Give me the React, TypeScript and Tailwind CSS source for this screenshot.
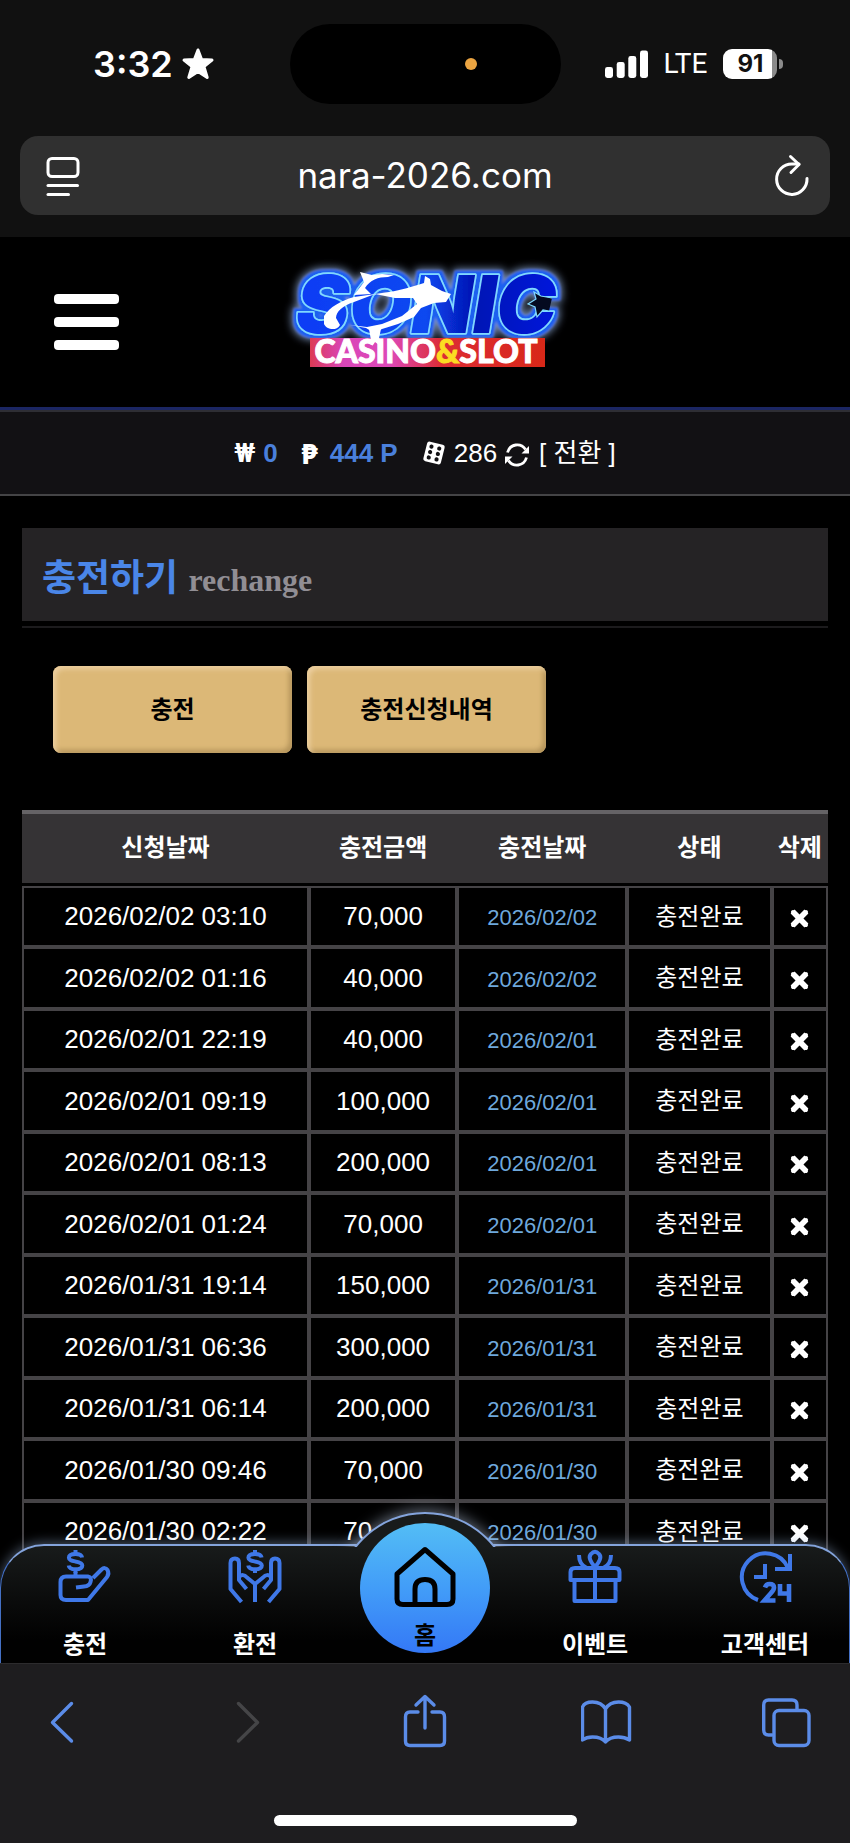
import type { ReactNode } from "react";

const SANS = "font-['Liberation_Sans','Noto_Sans_CJK_KR',sans-serif]";

type Deposit = { requested: string; amount: string; date: string };

const deposits: Deposit[] = [
  { requested: "2026/02/02 03:10", amount: "70,000", date: "2026/02/02" },
  { requested: "2026/02/02 01:16", amount: "40,000", date: "2026/02/02" },
  { requested: "2026/02/01 22:19", amount: "40,000", date: "2026/02/01" },
  { requested: "2026/02/01 09:19", amount: "100,000", date: "2026/02/01" },
  { requested: "2026/02/01 08:13", amount: "200,000", date: "2026/02/01" },
  { requested: "2026/02/01 01:24", amount: "70,000", date: "2026/02/01" },
  { requested: "2026/01/31 19:14", amount: "150,000", date: "2026/01/31" },
  { requested: "2026/01/31 06:36", amount: "300,000", date: "2026/01/31" },
  { requested: "2026/01/31 06:14", amount: "200,000", date: "2026/01/31" },
  { requested: "2026/01/30 09:46", amount: "70,000", date: "2026/01/30" },
  { requested: "2026/01/30 02:22", amount: "70,000", date: "2026/01/30" },
];

function StatusBar() {
  return (
    <div className="grid grid-cols-[1fr_271px_1fr] items-center pt-6">
      <div className="flex items-center gap-2 pl-[93px] font-['Inter',sans-serif] text-4xl font-semibold text-white">
        <span>3:32</span>
        <svg width="34" height="34" viewBox="0 0 34 34" fill="#fff" stroke="#fff" strokeWidth="3" strokeLinejoin="round" aria-hidden="true">
          <path d="M17 3 L20.6 12.6 L31 13.1 L22.9 19.5 L26.2 30.5 L17 24.4 L7.8 30.5 L11.1 19.5 L3 13.1 L13.4 12.6 Z" />
        </svg>
      </div>
      <div className="flex h-20 items-center justify-end rounded-full bg-black pr-[84px]">
        <span className="size-3 rounded-full bg-[#eba441]" />
      </div>
      <div className="flex items-center gap-4 pl-11 text-white">
        <svg width="43" height="28" viewBox="0 0 43 28" fill="#fff" aria-hidden="true">
          <rect x="0" y="17" width="8" height="11" rx="2.4" />
          <rect x="11.7" y="12" width="8" height="16" rx="2.4" />
          <rect x="23.3" y="6" width="8" height="22" rx="2.4" />
          <rect x="35" y="0.5" width="8" height="27.5" rx="2.4" />
        </svg>
        <span className="font-['Roboto',sans-serif] text-[28px] leading-8">LTE</span>
        <div className="flex items-center gap-0.5">
          <span className="flex h-[30px] w-[54px] items-center justify-center rounded-[9px] bg-[linear-gradient(90deg,#fff_49px,#8b8b8b_49px)] font-['Inter',sans-serif] text-2xl font-bold text-[#111]">
            91
          </span>
          <span className="h-2.5 w-1 rounded-r-full bg-[#8b8b8b]" />
        </div>
      </div>
    </div>
  );
}

function AddressBar() {
  return (
    <div className="mx-5 mt-8 mb-[22px] flex h-[79px] items-center justify-between rounded-[18px] bg-[#303030] px-5 text-white">
      <button type="button" aria-label="페이지 메뉴">
        <svg className="overflow-visible" width="36" height="44" viewBox="0 0 36 44" fill="none" stroke="#fff" strokeWidth="3" strokeLinecap="round" aria-hidden="true">
          <rect x="8" y="4.500" width="30" height="18" rx="4" />
          <path d="M8 31.500 H37.500" />
          <path d="M8 40.500 H28.500" />
        </svg>
      </button>
      <span className="font-['Inter',sans-serif] text-[35px]">nara-2026.com</span>
      <button type="button" aria-label="새로고침">
        <svg width="36" height="44" viewBox="0 0 36 44" fill="none" stroke="#fff" strokeWidth="3" strokeLinecap="round" strokeLinejoin="round" aria-hidden="true">
          <path d="M33 24.5 A15.2 15.2 0 1 1 17.8 10 L25 10" />
          <path d="M16.5 2.5 L25 10.5 L17 18.5" />
        </svg>
      </button>
    </div>
  );
}

function Logo() {
  return (
    <svg className="overflow-visible" width="320" height="130" viewBox="-5 7 320 130" role="img" aria-label="SONIC CASINO&SLOT">
      <defs>
        <linearGradient id="neon" x1="0" y1="0" x2="1" y2="0">
          <stop offset="0" stopColor="#0a3cf5" />
          <stop offset="0.5" stopColor="#0a48f0" />
          <stop offset="0.68" stopColor="#0414b4" />
          <stop offset="1" stopColor="#0618dc" />
        </linearGradient>
        <linearGradient id="banner" x1="0" y1="0" x2="1" y2="0">
          <stop offset="0" stopColor="#dc3a55" />
          <stop offset="0.14" stopColor="#d946b8" />
          <stop offset="0.34" stopColor="#dd48b8" />
          <stop offset="0.56" stopColor="#dc2c34" />
          <stop offset="1" stopColor="#d82818" />
        </linearGradient>
        <filter id="halo" x="-20%" y="-40%" width="140%" height="180%">
          <feMorphology in="SourceAlpha" operator="dilate" radius="4" result="wide" />
          <feGaussianBlur in="wide" stdDeviation="4" result="outer" />
          <feFlood floodColor="#9dbcf0" floodOpacity="0.8" />
          <feComposite in2="outer" operator="in" result="outerGlow" />
          <feMorphology in="SourceAlpha" operator="dilate" radius="3" result="near" />
          <feGaussianBlur in="near" stdDeviation="1.2" result="inner" />
          <feFlood floodColor="#1f60f0" />
          <feComposite in2="inner" operator="in" result="innerGlow" />
          <feMerge>
            <feMergeNode in="outerGlow" />
            <feMergeNode in="innerGlow" />
            <feMergeNode in="SourceGraphic" />
          </feMerge>
        </filter>
      </defs>
      <text
        x="156"
        y="83"
        textAnchor="middle"
        fontFamily="Inter, sans-serif"
        fontWeight="900"
        fontStyle="italic"
        fontSize="80"
        fill="url(#neon)"
        stroke="#7fd8ff"
        strokeWidth="3.4"
        strokeLinejoin="round"
        paintOrder="stroke"
        filter="url(#halo)"
      >
        SONIC
      </text>
      <g fill="#fff">
        <path d="M54 66 C60 57 70 51 84 47 L119 42 C132 40 141 37 154 33 L155 26 L160 29 L161 35 L172 41 L181 44 L176 52 L164 53 L151 58 L144 67 L128 74 L112 79 L104 83 L96 78 L80 75 L97 77 L112 74 L132 66 L147 54 L143 48 L125 48 L105 44 L84 52 C72 56 66 62 66 68 L70 75 C66 82 56 79 54 74 Z" />
        <path d="M84 45 L94 32 L90 22 L102 25 L112 24 L124 25 L118 27 C108 27 100 30 95 38 L101 44 Z" />
      </g>
      <path d="M282 48 L271 46 L264 42 L266 49 L258 54 L265 57 L267 67 L273 60 L279 61" fill="#050a20" stroke="#7fd8ff" strokeWidth="1.2" />
      <rect x="40" y="88" width="235" height="29" fill="url(#banner)" />
      <path d="M99 79 L111 79 L109 88 L113 92 L113 98 L105 92 L102 96 Z" fill="#fff" />
      <text x="156" y="113" textAnchor="middle" fontFamily="Lato, sans-serif" fontWeight="900" fontSize="32" fill="#fff" stroke="#fff" strokeWidth="1">
        CASINO<tspan fill="#fbdc22" stroke="#fbdc22">&amp;</tspan>SLOT
      </text>
    </svg>
  );
}

function SiteHeader() {
  return (
    <header className="grid h-[175px] grid-cols-[1fr_auto_1fr] items-center border-b-2 border-[#2e2e34] bg-black pb-1 shadow-[inset_0_-3px_0_#1b2663]">
      <div className="pl-[54px]">
        <button type="button" aria-label="메뉴" className="flex w-[65px] flex-col gap-[13px]">
          <span className="h-2.5 w-full rounded-sm bg-white" />
          <span className="h-2.5 w-full rounded-sm bg-white" />
          <span className="h-2.5 w-full rounded-sm bg-white" />
        </button>
      </div>
      <a href="#home" className="block">
        <Logo />
      </a>
    </header>
  );
}

function BalanceBar() {
  return (
    <div className="flex h-[84px] items-center justify-center border-b-2 border-[#444446] bg-[#121114] text-[26px] text-white">
      <span className="font-['Roboto','Noto_Sans',sans-serif] font-bold">₩</span>
      <span className="ml-2 font-bold text-[#4a80dc]">0</span>
      <span className="ml-6 font-['Noto_Sans',sans-serif] text-[28px] leading-8 font-extrabold">₱</span>
      <span className="ml-3 font-bold text-[#4a80dc]">444 P</span>
      <svg className="ml-6" width="24" height="24" viewBox="0 0 24 24" aria-hidden="true">
        <g transform="rotate(14 12 12)">
          <rect x="3" y="2" width="18" height="20" rx="2.5" fill="#fff" />
          <g fill="#121114">
            <circle cx="8" cy="6.4" r="2.1" />
            <circle cx="16" cy="6.4" r="2.1" />
            <circle cx="8" cy="12" r="2.1" />
            <circle cx="16" cy="12" r="2.1" />
            <circle cx="8" cy="17.6" r="2.1" />
            <circle cx="16" cy="17.6" r="2.1" />
          </g>
        </g>
      </svg>
      <span className="ml-2">286</span>
      <button type="button" className="ml-2 flex items-center gap-2.5">
        <svg className="mt-1" width="24" height="26" viewBox="0 0 24 26" fill="none" stroke="#fff" strokeWidth="2.8" aria-hidden="true">
          <path d="M2.500 10.500 C5 1.500 16 0.500 20.500 7.500" />
          <path d="M21.500 15.500 C19 24.500 8 25.500 3.500 18.500" />
          <path d="M24 4 V11.500 H16.500 Z" fill="#fff" stroke="none" />
          <path d="M0 22 V14.500 H7.500 Z" fill="#fff" stroke="none" />
        </svg>
        <span>[ 전환 ]</span>
      </button>
    </div>
  );
}

function DeleteIcon() {
  return (
    <svg width="21" height="21" viewBox="0 0 21 21" stroke="#fff" fill="none" aria-hidden="true">
      <path d="M3.600 3.600 L17.400 17.400 M17.400 3.600 L3.600 17.400" strokeWidth="5.6" />
      <path d="M4 4 L17 17 M17 4 L4 17" strokeWidth="4" strokeLinecap="round" />
    </svg>
  );
}

const cell = "border-2 border-[#454346] p-0 text-center align-middle";
const goldButton =
  "h-[87px] w-[239px] rounded-lg bg-[#dcb877] text-2xl font-bold text-black shadow-[inset_3px_3px_5px_#eccfa0,inset_-3px_-3px_5px_#b3935a]";

function DepositTable() {
  return (
    <table className="w-full table-fixed border-separate border-spacing-0 text-white">
      <colgroup>
        <col className="w-[35.6%]" />
        <col className="w-[18.4%]" />
        <col className="w-[21.1%]" />
        <col className="w-[17.9%]" />
        <col className="w-[7%]" />
      </colgroup>
      <thead>
        <tr className="h-[73px] text-2xl">
          {["신청날짜", "충전금액", "충전날짜", "상태", "삭제"].map((label) => (
            <th key={label} scope="col" className="border-t-4 border-[#656366] bg-[#353335] p-0 pb-0.5 font-bold whitespace-nowrap">
              {label}
            </th>
          ))}
        </tr>
      </thead>
      <tbody>
        <tr aria-hidden="true" className="h-[3px]">
          <td colSpan={5} className="p-0" />
        </tr>
        {deposits.map((row) => (
          <tr key={row.requested} className="h-[61px] odd:h-[62px]">
            <td className={`${cell} text-[26px]`}>{row.requested}</td>
            <td className={`${cell} text-[26px]`}>{row.amount}</td>
            <td className={`${cell} text-[22px] text-[#6ea8dc]`}>
              <span className="block pt-0.5">{row.date}</span>
            </td>
            <td className={`${cell} text-2xl`}>충전완료</td>
            <td className={cell}>
              <button type="button" aria-label="삭제" className="inline-flex pt-1 align-middle">
                <DeleteIcon />
              </button>
            </td>
          </tr>
        ))}
      </tbody>
    </table>
  );
}

const navStroke = { fill: "none", stroke: "#3f78e8", strokeWidth: 4, strokeLinejoin: "round" as const };

function NavItem({ label, children }: { label: string; children: ReactNode }) {
  return (
    <a href={`#${label}`} className="flex flex-col items-center justify-between pt-1 pb-[3px]">
      <svg width="56" height="56" viewBox="0 0 56 56" {...navStroke} aria-hidden="true">
        {children}
      </svg>
      <span className="text-2xl leading-[30px] font-bold text-white">{label}</span>
    </a>
  );
}

function Dollar() {
  return (
    <>
      <path d="M6.600 -4 C6.200 -6.500 3.800 -7.600 0 -7.600 C-4 -7.600 -6.600 -6.200 -6.600 -3.800 C-6.600 -1.200 -3.500 -0.700 0 0 C4 0.700 6.800 1.400 6.800 4 C6.800 6.400 4 7.800 0 7.800 C-3.800 7.800 -6.400 6.600 -6.800 4" />
      <path d="M0 -11.500 V-7.500 M0 7.500 V11.500" />
    </>
  );
}

function BottomNav() {
  return (
    <nav className="absolute inset-x-0 bottom-0 h-[119px]">
      <div className="absolute inset-0 rounded-t-[44px] border-x border-t-2 border-x-[#4470c4] border-t-[#84a4dc] bg-[linear-gradient(180deg,#181b1b_0%,#0b0c0c_45%,#010101_80%)] shadow-[0_-2px_12px_#9bb4d870]" />
      <div className="absolute -top-14 left-1/2 h-[59px] w-60 -translate-x-1/2 overflow-hidden">
        <div className="mx-auto mt-6 size-[178px] rounded-full border-2 border-[#84a4dc] bg-[#181b1b] shadow-[0_-3px_14px_#b4c4dc80]" />
      </div>
      <div className="relative grid h-full grid-cols-5">
        <NavItem label="충전">
          <g transform="translate(18.500 13.500)">
            <Dollar />
          </g>
          <path d="M18.500 24 V29" />
          <path d="M36 30 L44.500 21.500 Q48 18.500 50.500 22 Q52.500 25.500 50 29 L31 52 H9 Q3.500 52 3.500 47 V34 Q3.500 28.500 9 28.500 H31 Q35 29 33.500 34 Q32.500 38 27 38.500 L19 39.500" />
        </NavItem>
        <NavItem label="환전">
          <g transform="translate(28 13.500)">
            <Dollar />
          </g>
          <path d="M14.500 54 L3.500 41 V15 Q3.500 10.500 8 10.500 Q12 10.500 12 15 V32 L19.500 41 M12 29 Q16 25 20 29.500 L28 36 V54 M41.500 54 L52.500 41 V15 Q52.500 10.500 48 10.500 Q44 10.500 44 15 V32 L36.500 41 M44 29 Q40 25 36 29.500 L28 36" />
        </NavItem>
        <div className="relative">
          <a
            href="#home"
            className="absolute bottom-2.5 left-1/2 flex size-[130px] -translate-x-1/2 flex-col items-center rounded-full bg-[linear-gradient(180deg,#53bdf5_0%,#429df8_50%,#3478f6_100%)] pt-[22px]"
          >
            <svg width="64" height="64" viewBox="0 0 64 64" fill="none" stroke="#000" strokeWidth="5" strokeLinejoin="round" aria-hidden="true">
              <path d="M32 4.500 L60 29 V54 Q60 59.500 54 59.500 H10 Q4 59.500 4 54 V29 Z" />
              <path d="M22 59 V44 Q22 34.500 32 34.500 Q42 34.500 42 44 V59" />
            </svg>
            <span className="mt-3 text-2xl leading-[30px] font-bold text-black">홈</span>
          </a>
        </div>
        <NavItem label="이벤트">
          <path d="M3.500 32 V24 Q3.500 20 8 20 H48 Q52.500 20 52.500 24 V32 Z M7.500 32 V53 H48.500 V32 M28 20 V53" />
          <path d="M28 19 Q20 10 24 6 Q28 1.500 32 6 Q36 10 28 19 M12 7 Q12 17 20 20 M44 7 Q44 17 36 20" />
        </NavItem>
        <NavItem label="고객센터">
          <path d="M21 52 A24 24 0 1 1 51 20" />
          <path d="M53 6 V21 H38" strokeLinejoin="miter" />
          <path d="M28 16 V29 H17" strokeLinejoin="miter" />
          <path d="M28 39.500 Q29 36 32.500 36 Q37 36 37 39.500 Q37 42 34 45 L27.500 52.500 H38.500 M43 36 V45.500 H53 M52 36 V54" strokeLinejoin="miter" strokeWidth="4.600" />
        </NavItem>
      </div>
    </nav>
  );
}

function BrowserButton({ label, disabled, children }: { label: string; disabled?: boolean; children: ReactNode }) {
  return (
    <button type="button" aria-label={label} disabled={disabled} className="text-[#5b8ce8] disabled:text-[#454547]">
      <svg width="52" height="56" viewBox="0 0 52 56" fill="none" stroke="currentColor" strokeWidth="3.4" strokeLinecap="round" strokeLinejoin="round" aria-hidden="true">
        {children}
      </svg>
    </button>
  );
}

function BrowserToolbar() {
  return (
    <footer className="flex h-[180px] flex-col items-center justify-between border-t border-[#2c2b2d] bg-[#1e1d1f] pt-[30px] pb-[17px]">
      <div className="flex w-full justify-between px-9">
        <BrowserButton label="뒤로">
          <path d="M35.500 9.500 L16.500 28.500 L35.500 47" />
        </BrowserButton>
        <BrowserButton label="앞으로" disabled>
          <path d="M20.500 9.500 L39.500 28.500 L20.500 47" />
        </BrowserButton>
        <BrowserButton label="공유">
          <path d="M19 18 H11 Q6.500 18 6.500 23 V47 Q6.500 51.500 11 51.500 H41 Q45.500 51.500 45.500 47 V23 Q45.500 18 41 18 H33" />
          <path d="M26 34 V3 M17 11 L26 2.500 L35 11" />
        </BrowserButton>
        <BrowserButton label="책갈피">
          <path d="M24.500 15 Q20.500 8 11.500 8 Q3.500 8 1.500 13 V46 Q5.500 43 11.500 43 Q20.500 43 24.500 48 Q28.500 43 37.500 43 Q43.500 43 48.500 46 V13 Q45.500 8 37.500 8 Q28.500 8 24.500 15 Z M24.500 15 V48" />
        </BrowserButton>
        <BrowserButton label="탭">
          <path d="M10 41 H6.500 Q1.700 41 1.700 36 V11 Q1.700 6 6.500 6 H30 Q35 6 35 11 V16" />
          <rect x="12" y="16.500" width="35" height="35" rx="5" />
        </BrowserButton>
      </div>
      <div className="h-[11px] w-[303px] rounded-full bg-white" />
    </footer>
  );
}

export default function App() {
  return (
    <div className={`flex h-screen flex-col bg-black ${SANS}`}>
      <div className="bg-[#111111]">
        <StatusBar />
        <AddressBar />
      </div>
      <div className="relative min-h-0 flex-1 overflow-hidden">
        <SiteHeader />
        <BalanceBar />
        <main className="px-[22px] pt-8">
          <div className="flex h-[93px] items-center bg-[#252325] px-5 pt-2">
            <h1 className="text-[37px] font-bold text-[#4a86e8]">
              충전하기 <small className="font-['Liberation_Serif',serif] text-[32px] text-[#918e94]">rechange</small>
            </h1>
          </div>
          <div className="mt-[5px] border-t-2 border-[#1c1b1d]" />
          <div className="mt-[38px] mb-[57px] flex gap-[15px] px-[31px]">
            <button type="button" className={goldButton}>충전</button>
            <button type="button" className={goldButton}>충전신청내역</button>
          </div>
          <DepositTable />
        </main>
        <BottomNav />
      </div>
      <BrowserToolbar />
    </div>
  );
}
